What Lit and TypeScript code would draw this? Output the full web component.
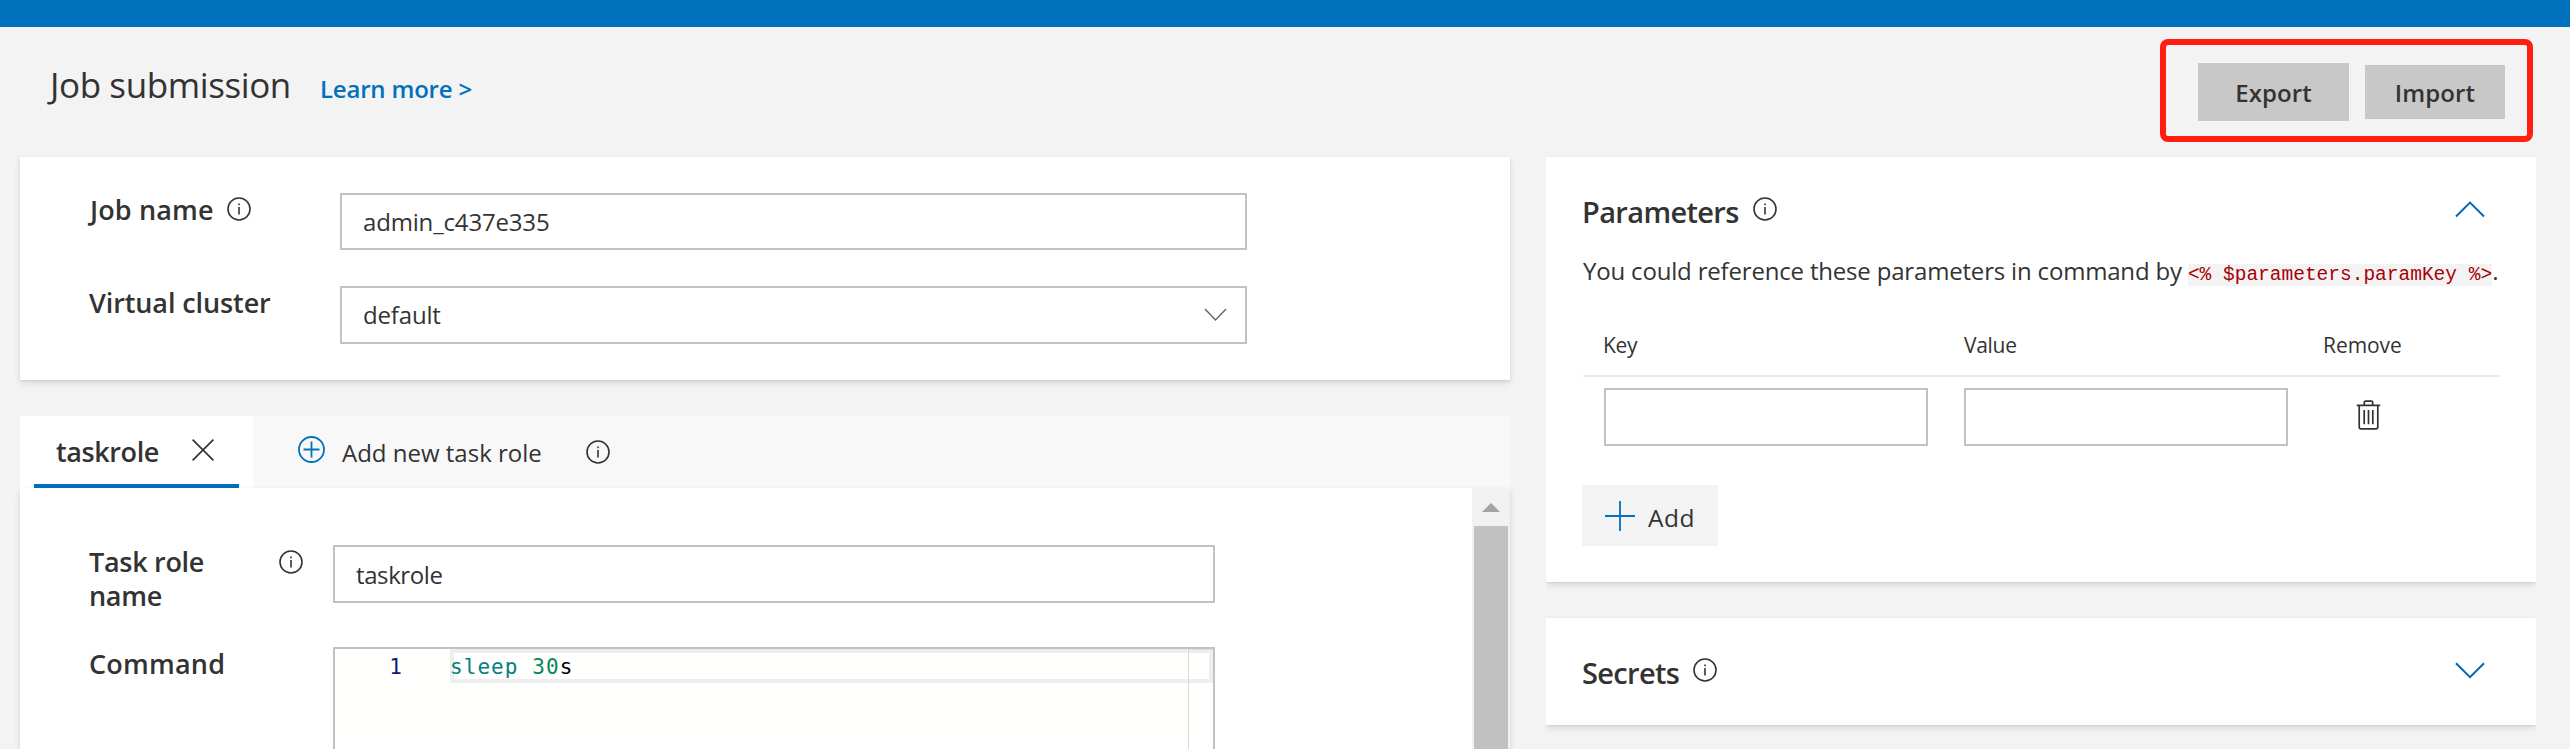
import { LitElement, html, css } from "lit";
import { customElement, property } from "lit/decorators.js";

@customElement("info-icon")
class InfoIcon extends LitElement {
  static styles = css`
    :host { display: block; width: 24px; height: 24px; flex: none; }
    svg { display: block; }
  `;
  render() {
    return html`<svg width="24" height="24" viewBox="0 0 24 24" fill="none" stroke="#333" stroke-width="1.6">
      <circle cx="12" cy="12" r="11"></circle>
      <path d="M12 10v7.5M12 6.5v1.8"></path>
    </svg>`;
  }
}

@customElement("chevron-icon")
class ChevronIcon extends LitElement {
  @property({ type: Boolean }) up = false;
  static styles = css`
    :host { display: block; flex: none; }
    svg { display: block; }
  `;
  render() {
    return html`<svg width="30" height="17" viewBox="0 0 30 17" fill="none" stroke="#0067b4" stroke-width="2">
      <path d=${this.up ? "M1 15.5L15 1.6L29 15.5" : "M1 1.3L15 15.2L29 1.3"}></path>
    </svg>`;
  }
}

@customElement("side-card")
class SideCard extends LitElement {
  @property() heading = "";
  @property({ type: Boolean }) open = false;
  static styles = css`
    :host {
      display: block;
      box-sizing: border-box;
      background: #fff;
      padding: 27px 36px 0 37px;
      box-shadow: 0 3px 7px rgba(0, 0, 0, 0.11), 0 0.5px 2px rgba(0, 0, 0, 0.07);
    }
    .head { display: flex; align-items: center; height: 50px; }
    .name { font-size: 29px; font-weight: 600; line-height: 40px; margin: 5px 14px 0 -1px; letter-spacing: -0.65px; }
    chevron-icon { margin-left: auto; margin-right: 15px; }
  `;
  render() {
    return html`<div class="head">
        <div class="name">${this.heading}</div>
        <info-icon></info-icon>
        <chevron-icon ?up=${this.open}></chevron-icon>
      </div>
      <slot></slot>`;
  }
}

@customElement("app-root")
class AppRoot extends LitElement {
  static styles = css`
    :host {
      display: block;
      width: 2570px;
      height: 749px;
      overflow: hidden;
      background: #f3f3f3;
      color: #333;
      font-family: "Open Sans", "Noto Sans", sans-serif;
    }
    * { box-sizing: border-box; }
    svg { display: block; flex: none; }
    .bar { height: 27px; background: #0071bc; }
    .header { display: flex; height: 130px; padding: 0 37px 0 50px; justify-content: space-between; align-items: flex-start; }
    .titles { display: flex; align-items: baseline; padding-top: 34px; white-space: nowrap; }
    .title { width: 270px; font-size: 35px; line-height: 48px; letter-spacing: -0.4px; }
    .learn { font-size: 24px; font-weight: 600; color: #0071bc; letter-spacing: -0.2px; }
    .actions {
      display: flex; align-items: center; gap: 16px;
      width: 373px; height: 103px; margin-top: 12px; padding: 3px 0 0 32px;
      border: 6px solid #ff1f10; border-radius: 8px;
    }
    .action { display: flex; align-items: center; justify-content: center; padding-top: 1px; background: #c8c8c8; font-size: 24px; font-weight: 600; letter-spacing: 0.1px; }
    .export { width: 151px; height: 58px; }
    .import { width: 140px; height: 54px; }

    .main { display: flex; gap: 36px; padding-left: 20px; height: 592px; }
    .left { width: 1490px; display: flex; flex-direction: column; }
    .right { width: 990px; display: flex; flex-direction: column; gap: 36px; clip-path: inset(-20px 0 -20px 0); }
    .card { background: #fff; box-shadow: 0 3px 7px rgba(0, 0, 0, 0.11), 0 0.5px 2px rgba(0, 0, 0, 0.07); }
    .basics { height: 223px; padding: 36px 0 0 69px; display: flex; flex-direction: column; gap: 36px; flex: none; }
    .row { display: flex; align-items: flex-start; }
    .label { display: flex; align-items: flex-start; width: 251px; font-size: 27px; font-weight: 600; line-height: 34px; letter-spacing: -0.1px; }
    .label .job { margin: 0 13px 0 1px; letter-spacing: 0.15px; }
    .label .job + info-icon { margin-top: 4px; }
    .field { border: 2px solid #c2c2c2; background: #fff; height: 58px; padding: 0 21px; font-size: 24px; line-height: 56px; letter-spacing: -0.17px; }
    .basics .field { width: 907px; }
    .basics .short { height: 57px; line-height: 54px; }
    .select { display: flex; justify-content: space-between; align-items: center; padding-right: 18px; }

    .tabs { display: flex; flex: none; height: 72px; margin-top: 36px; background: #f8f8f8; }
    .tab { width: 233px; background: #fff; padding: 0 14px; }
    .tabin { display: flex; align-items: center; height: 72px; border-bottom: 4px solid #0071bc; padding-left: 22px; }
    .tabname { font-size: 27px; font-weight: 600; letter-spacing: -0.4px; line-height: 36px; margin: 3px 33px 0 0; }
    .addrole { display: flex; align-items: center; padding-left: 45px; font-size: 24px; }
    .addrole svg { margin-top: -5px; }
    .addrole .txt { margin: 1px 44px 0 17px; }
    .panel { flex: 1; display: flex; }
    .form { flex: 1; padding: 57px 0 0 69px; }
    .form .label { width: 244px; justify-content: space-between; padding-right: 30px; letter-spacing: -0.3px; }
    .form .label.cmdlabel { letter-spacing: 0.2px; }
    .form .label info-icon { margin-top: 5px; }
    .wrap { width: 140px; }
    .form .field { width: 882px; letter-spacing: -0.4px; }
    .first { height: 102px; }
    .editor {
      position: relative; display: flex; width: 882px; height: 120px;
      border: 2px solid #c2c2c2; background: #fffffe;
      font-family: "DejaVu Sans Mono", monospace; font-size: 21px; line-height: 36px; letter-spacing: 1.06px; color: #000;
    }
    .gutter { width: 115px; padding-right: 47px; text-align: right; color: #0b216f; }
    .line { flex: 1; height: 34px; box-shadow: inset 0 0 0 4px #eee; white-space: pre; }
    .cmd { color: #008080; }
    .num { color: #098658; }
    .ruler { position: absolute; top: 0; bottom: 0; right: 0; width: 25px; border-left: 1px solid #d8d8d8; border-top: 1px solid #ddd; }
    .scroll { width: 38px; background: #f1f1f1; display: flex; flex-direction: column; align-items: center; }
    .up { height: 38px; padding-top: 15px; }
    .thumb { flex: 1; width: 34px; background: #c1c1c1; }

    .params { height: 425px; flex: none; }
    .secrets { height: 107px; flex: none; }
    .desc { margin-top: 17px; font-size: 24px; line-height: 40px; letter-spacing: -0.18px; white-space: nowrap; }
    .code { font-family: "Liberation Mono", monospace; font-size: 19.5px; letter-spacing: 0; color: #a80008; background: #f3f3f3; }
    .thead, .trow { display: grid; grid-template-columns: 360px 360px 1fr; padding-left: 21px; }
    .thead { margin-top: 28px; height: 54px; border-bottom: 2px solid #eaeaea; font-size: 21px; line-height: 44px; letter-spacing: -0.3px; }
    .thead .k { margin-left: -1px; }
    .thead .r { margin-left: -1px; letter-spacing: -0.06px; }
    .trow { margin-top: 11px; }
    .trow .field { width: 324px; }
    .trash { padding: 12px 0 0 32px; }
    .add { display: flex; align-items: center; width: 136px; height: 61px; margin: 39px 0 0 -1px; padding-left: 23px; background: #f3f3f3; font-size: 24.5px; letter-spacing: 0.5px; }
    .add .txt { margin: 3px 0 0 13px; }
  `;

  render() {
    return html`
      <div class="bar"></div>
      <div class="header">
        <div class="titles">
          <div class="title">Job submission</div>
          <div class="learn">Learn more &gt;</div>
        </div>
        <div class="actions">
          <div class="action export">Export</div>
          <div class="action import">Import</div>
        </div>
      </div>
      <div class="main">
        <div class="left">
          <div class="card basics">
            <div class="row">
              <div class="label"><span class="job">Job name</span><info-icon></info-icon></div>
              <div class="field short">admin_c437e335</div>
            </div>
            <div class="row">
              <div class="label">Virtual cluster</div>
              <div class="field select">
                <span>default</span>
                <svg width="23" height="14" viewBox="0 0 23 14" fill="none" stroke="#666" stroke-width="1.5"><path d="M1 1L11.5 12L22 1"></path></svg>
              </div>
            </div>
          </div>
          <div class="tabs">
            <div class="tab">
              <div class="tabin">
                <span class="tabname">taskrole</span>
                <svg width="22" height="22" viewBox="0 0 22 22" stroke="#333" stroke-width="1.7"><path d="M.6 .6L21.4 21.4M21.4 .6L.6 21.4"></path></svg>
              </div>
            </div>
            <div class="addrole">
              <svg width="27" height="27" viewBox="0 0 27 27" fill="none" stroke="#0071bc" stroke-width="1.8"><circle cx="13.5" cy="13.5" r="12.5"></circle><path d="M5.5 13.5H21.5M13.5 5.5V21.5"></path></svg>
              <span class="txt">Add new task role</span>
              <info-icon></info-icon>
            </div>
          </div>
          <div class="card panel">
            <div class="form">
              <div class="row first">
                <div class="label"><span class="wrap">Task role name</span><info-icon></info-icon></div>
                <div class="field">taskrole</div>
              </div>
              <div class="row">
                <div class="label cmdlabel">Command</div>
                <div class="editor">
                  <div class="gutter">1</div>
                  <div class="line"><span class="cmd">sleep</span> <span class="num">30</span>s</div>
                  <div class="ruler"></div>
                </div>
              </div>
            </div>
            <div class="scroll">
              <div class="up"><svg width="18" height="9" viewBox="0 0 18 9" fill="#a3a3a3"><path d="M0 9L9 0L18 9Z"></path></svg></div>
              <div class="thumb"></div>
            </div>
          </div>
        </div>
        <div class="right">
          <side-card class="params" heading="Parameters" open>
            <div class="desc">You could reference these parameters in command by <span class="code">&lt;% $parameters.paramKey %&gt;</span>.</div>
            <div class="thead"><span class="k">Key</span><span>Value</span><span class="r">Remove</span></div>
            <div class="trow">
              <div class="field"></div>
              <div class="field"></div>
              <div class="trash">
                <svg width="25" height="30" viewBox="0 0 25 30" fill="none" stroke="#333" stroke-width="1.7">
                  <path d="M.8 5.4H24.2M8.3 5V2.6Q8.3 1.2 9.7 1.2H15.3Q16.7 1.2 16.7 2.6V5M3.2 5.4V27Q3.2 28.8 5 28.8H20Q21.8 28.8 21.8 27V5.4M8.2 10V24.3M12.5 10V24.3M16.8 10V24.3"></path>
                </svg>
              </div>
            </div>
            <div class="add">
              <svg width="30" height="30" viewBox="0 0 30 30" stroke="#0071bc" stroke-width="1.8"><path d="M0 15H30M15 0V30"></path></svg>
              <span class="txt">Add</span>
            </div>
          </side-card>
          <side-card class="secrets" heading="Secrets"></side-card>
        </div>
      </div>
    `;
  }
}
